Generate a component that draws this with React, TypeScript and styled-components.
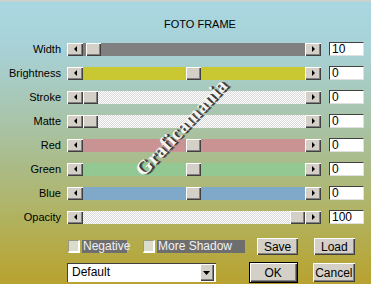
import React from 'react';
import styled, { createGlobalStyle } from 'styled-components';

const GlobalStyle = createGlobalStyle`
  html, body {
    margin: 0;
    padding: 0;
  }
  body {
    font-family: "Liberation Sans", Arial, sans-serif;
    font-size: 11px;
  }
`;

const Window = styled.div`
  position: relative;
  width: 371px;
  height: 284px;
  overflow: hidden;
  background: linear-gradient(
    180deg,
    #d0d0cc 0px,
    #d0d0cc 1px,
    #a9d7e1 2px,
    #a8d1d6 50px,
    #a8c6b0 110px,
    #aabc8c 160px,
    #b0b466 210px,
    #b6a83e 260px,
    #b8a232 284px
  );
  color: #000;
`;

const Title = styled.div`
  height: 37px;
  box-sizing: border-box;
  padding: 18px 0 0 29px;
  text-align: center;
  line-height: 12px;
  font-size: 11px;
`;

const Rows = styled.div`
  display: flex;
  flex-direction: column;
`;

const Row = styled.div`
  display: flex;
  align-items: center;
  height: 24px;
`;

const Label = styled.div`
  width: 61px;
  margin-right: 6px;
  text-align: right;
  line-height: 13px;
`;

const Slider = styled.div`
  display: flex;
  width: 254px;
  height: 13px;
`;

const bevel = `
  background: #d4d0c8;
  box-shadow: inset 1px 1px #ffffff, inset -1px -1px #404040, inset -2px -2px #808080;
`;

const ArrowButton = styled.div`
  ${bevel}
  width: 16px;
  height: 13px;
  flex: none;
  display: flex;
  align-items: center;
  justify-content: center;
`;

const Track = styled.div<{ $fill: string }>`
  position: relative;
  flex: 1;
  height: 13px;
  background: ${(p) => p.$fill};
  background-size: 2px 2px;
`;

const Thumb = styled.div`
  ${bevel}
  position: absolute;
  top: 0;
  width: 15px;
  height: 13px;
`;

const ValueBox = styled.div`
  width: 35px;
  height: 14px;
  margin-left: 8px;
  box-sizing: border-box;
  background: #fff;
  border-top: 1px solid #404040;
  border-left: 1px solid #404040;
  border-right: 1px solid #e0e0e0;
  border-bottom: 1px solid #e0e0e0;
  padding-left: 2px;
  line-height: 12px;
  font-size: 12px;
`;

const Options = styled.div`
  display: flex;
  align-items: center;
  height: 17px;
  margin-top: 9px;
  padding-left: 68px;
`;

const CheckBox = styled.div`
  width: 12px;
  height: 13px;
  box-sizing: border-box;
  border-top: 1px solid #9a9a80;
  border-left: 1px solid #9a9a80;
  border-right: 2px solid #ffffff;
  border-bottom: 2px solid #ffffff;
  background: #dcdccc;
  flex: none;
`;

const CheckLabel = styled.div<{ $w: number }>`
  width: ${(p) => p.$w}px;
  height: 13px;
  margin-left: 2px;
  padding-left: 1px;
  box-sizing: border-box;
  background: #6e6e6e;
  color: #f2f2f2;
  line-height: 13px;
  font-size: 12px;
  margin-right: ${(p) => (p.$w > 60 ? 12 : 16)}px;
`;

const Button = styled.div<{ $w: number; $default?: boolean }>`
  ${bevel}
  width: ${(p) => p.$w}px;
  height: ${(p) => (p.$default ? 19 : 17)}px;
  box-sizing: border-box;
  display: flex;
  align-items: center;
  justify-content: center;
  font-size: 12px;
  margin-right: 16px;
  ${(p) =>
    p.$default &&
    `box-shadow: 0 0 0 1px #000, inset 1px 1px #ffffff, inset -1px -1px #404040, inset -2px -2px #808080;`}
`;

const Bottom = styled.div`
  display: flex;
  align-items: center;
  margin-top: 8px;
  padding-left: 67px;
`;

const Select = styled.div`
  display: flex;
  width: 158px;
  height: 19px;
  box-sizing: border-box;
  background: #fff;
  border-top: 1px solid #404040;
  border-left: 1px solid #404040;
  margin-right: 34px;
`;

const SelectText = styled.div`
  flex: 1;
  padding-left: 4px;
  line-height: 17px;
  font-size: 12px;
`;

const SelectArrow = styled(ArrowButton)`
  width: 14px;
  height: 17px;
  margin: 0 2px 0 0;
`;

const Watermark = styled.div`
  position: absolute;
  left: 119px;
  top: 116px;
  transform: rotate(-47deg);
  font-family: "Liberation Serif", "DejaVu Serif", serif;
  font-weight: bold;
  font-size: 20px;
  letter-spacing: 0.5px;
  color: #f4f4f0;
  text-shadow: 1px 1px 0 #2a2a2a, 2px 2px 0 #555;
  white-space: nowrap;
  pointer-events: none;
`;

const checker = 'repeating-conic-gradient(#d8d8d8 0 25%, #ffffff 0 50%)';

type SliderDef = { label: string; fill: string; pos: number; value: string };

const sliders: SliderDef[] = [
  { label: 'Width', fill: '#808080', pos: 3, value: '10' },
  { label: 'Brightness', fill: '#c9c832', pos: 103, value: '0' },
  { label: 'Stroke', fill: checker, pos: 0, value: '0' },
  { label: 'Matte', fill: checker, pos: 0, value: '0' },
  { label: 'Red', fill: '#c99393', pos: 103, value: '0' },
  { label: 'Green', fill: '#93c893', pos: 103, value: '0' },
  { label: 'Blue', fill: '#80a8c8', pos: 103, value: '0' },
  { label: 'Opacity', fill: checker, pos: 207, value: '100' },
];

function Arrow({ dir }: { dir: 'left' | 'right' | 'down' }) {
  const pts =
    dir === 'left' ? '3,0 3,6 0,3' : dir === 'right' ? '0,0 0,6 3,3' : '0,0 7,0 3.5,4';
  const w = dir === 'down' ? 7 : 3;
  const h = dir === 'down' ? 4 : 6;
  return (
    <svg width={w} height={h} viewBox={`0 0 ${w} ${h}`}>
      <polygon points={pts} fill="#000" />
    </svg>
  );
}

function SliderRow({ label, fill, pos, value }: SliderDef) {
  return (
    <Row>
      <Label>{label}</Label>
      <Slider>
        <ArrowButton>
          <Arrow dir="left" />
        </ArrowButton>
        <Track $fill={fill}>
          <Thumb style={{ left: pos }} />
        </Track>
        <ArrowButton>
          <Arrow dir="right" />
        </ArrowButton>
      </Slider>
      <ValueBox>{value}</ValueBox>
    </Row>
  );
}

export default function App() {
  return (
    <>
      <GlobalStyle />
      <Window>
        <Title>FOTO FRAME</Title>
        <Rows>
          {sliders.map((s) => (
            <SliderRow key={s.label} {...s} />
          ))}
        </Rows>
        <Options>
          <CheckBox />
          <CheckLabel $w={45}>Negative</CheckLabel>
          <CheckBox />
          <CheckLabel $w={90}>More Shadow</CheckLabel>
          <Button $w={41}>Save</Button>
          <Button $w={42}>Load</Button>
        </Options>
        <Bottom>
          <Select>
            <SelectText>Default</SelectText>
            <SelectArrow>
              <Arrow dir="down" />
            </SelectArrow>
          </Select>
          <Button $w={50} $default>
            OK
          </Button>
          <Button $w={45} style={{ height: 19 }}>
            Cancel
          </Button>
        </Bottom>
        <Watermark>Graficamania</Watermark>
      </Window>
    </>
  );
}
